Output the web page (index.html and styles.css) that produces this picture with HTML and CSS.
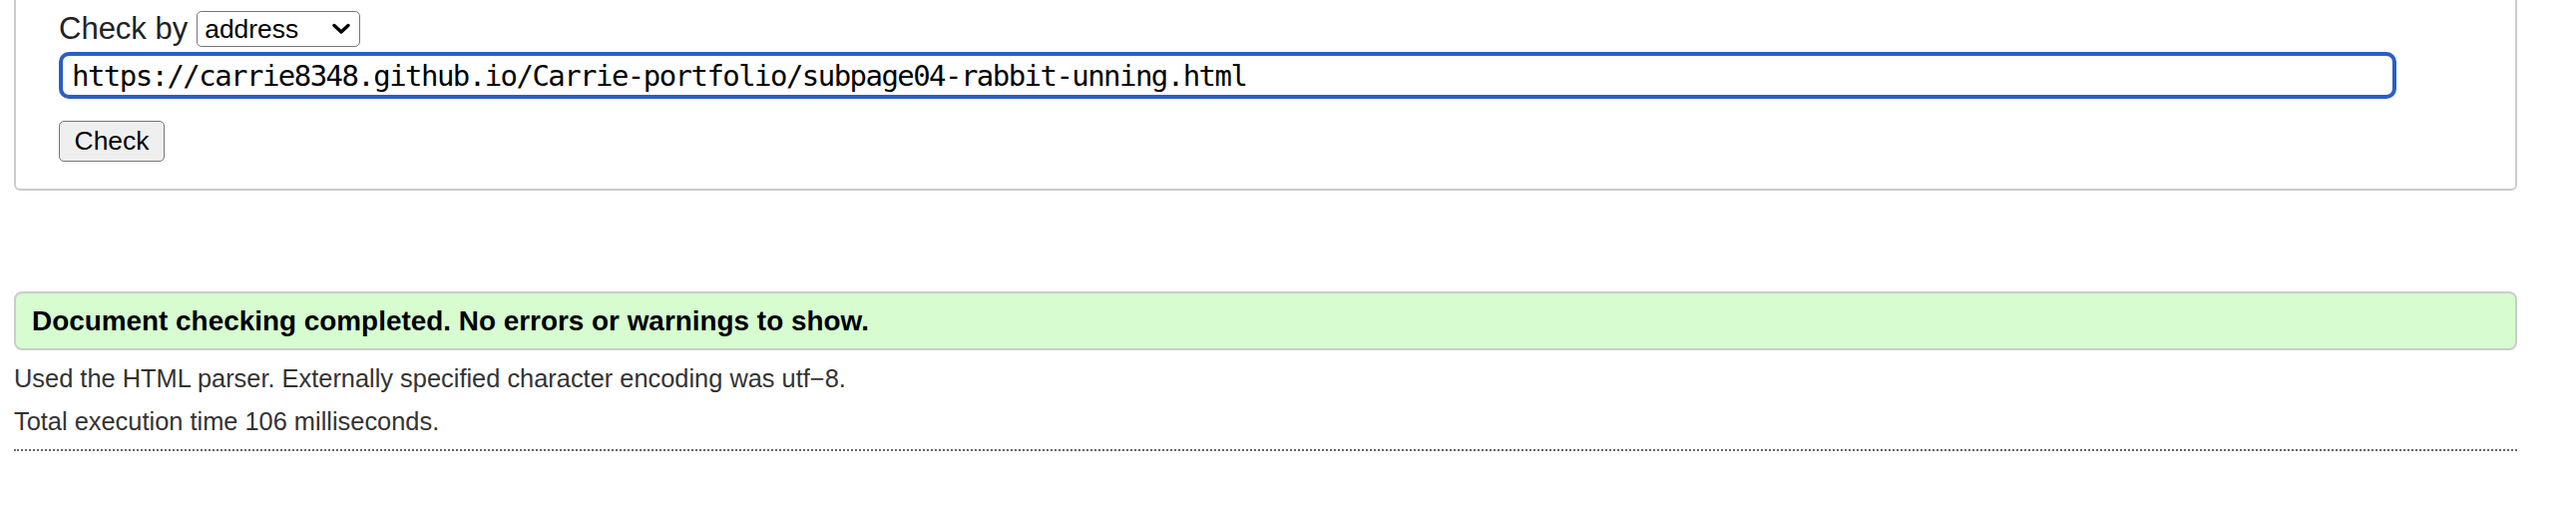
FILE: index.html
```html
<!DOCTYPE html>
<html lang="en">
<head>
<meta charset="utf-8">
<title>Nu Html Checker</title>
<link rel="stylesheet" href="styles.css">
</head>
<body>
<div class="page">
  <form class="panel">
    <div class="checkby">
      <label class="checkby-label" for="docselect">Check by</label>
      <select id="docselect" class="docselect">
        <option>address</option>
        <option>file upload</option>
        <option>text input</option>
      </select>
    </div>
    <input class="url" type="url" value="https://carrie8348.github.io/Carrie-portfolio/subpage04-rabbit-unning.html">
    <div class="submit-row">
      <button class="check-btn" type="button">Check</button>
    </div>
  </form>

  <div class="result">
    <p class="success">Document checking completed. No errors or warnings to show.</p>
  </div>
  <div class="details">
    <p class="info">Used the HTML parser. Externally specified character encoding was utf&#8722;8.</p>
    <p class="info">Total execution time 106 milliseconds.</p>
  </div>
</div>
</body>
</html>
```
FILE: styles.css
```css
html, body {
  margin: 0;
  padding: 0;
  background: #ffffff;
}

body {
  font-family: "Liberation Sans", Arial, sans-serif;
  color: #222222;
}

.page {
  margin: 0 59px 0 14px;
}

.panel {
  border: 2px solid #cccccc;
  border-top: none;
  border-radius: 0 0 6px 6px;
  padding: 11px 119px 27px 43px;
  display: flex;
  flex-direction: column;
  align-items: flex-start;
}

.checkby {
  display: flex;
  align-items: center;
  height: 36px;
}

.checkby-label {
  font-size: 31px;
  color: #222222;
  margin-right: 9px;
  line-height: 36px;
}

.docselect {
  -webkit-appearance: none;
  appearance: none;
  box-sizing: border-box;
  width: 164px;
  height: 36px;
  border: 1.5px solid #767676;
  border-radius: 5px;
  background-color: #ffffff;
  background-image: url("data:image/svg+xml;utf8,<svg xmlns='http://www.w3.org/2000/svg' width='18' height='12' viewBox='0 0 18 12'><path d='M2 2.5 L9 9 L16 2.5' fill='none' stroke='black' stroke-width='3.4' stroke-linecap='round' stroke-linejoin='round'/></svg>");
  background-repeat: no-repeat;
  background-position: right 9px center;
  background-size: 18px 12px;
  padding: 0 30px 0 7px;
  font-family: "Liberation Sans", Arial, sans-serif;
  font-size: 26.4px;
  color: #000000;
}

.url {
  box-sizing: border-box;
  width: 100%;
  height: 47px;
  margin-top: 5px;
  border: 4px solid #2a5ec6;
  border-radius: 10px;
  padding: 0 9px;
  font-family: "DejaVu Sans Mono", "Liberation Mono", monospace;
  font-size: 29px;
  letter-spacing: -1.55px;
  color: #000000;
  background: #ffffff;
  outline: none;
}

.submit-row {
  margin-top: 22px;
}

.check-btn {
  box-sizing: border-box;
  height: 41px;
  width: 106px;
  padding: 0;
  border: 1.5px solid #767676;
  border-radius: 5px;
  background: #efefef;
  font-family: "Liberation Sans", Arial, sans-serif;
  font-size: 26.4px;
  color: #000000;
}

.result {
  margin-top: 101px;
  box-sizing: border-box;
  height: 59px;
  border: 2px solid #cccccc;
  border-radius: 8px;
  background: #d6fcd0;
  display: flex;
  align-items: center;
  padding: 0 16px;
}

.success {
  margin: 0;
  font-size: 27.9px;
  font-weight: bold;
  color: #000000;
}

.details {
  margin-top: 7px;
  padding-bottom: 6px;
  border-bottom: 2px dotted #666666;
}

.info {
  margin: 0;
  font-size: 25.4px;
  line-height: 43px;
  color: #333333;
}
```
